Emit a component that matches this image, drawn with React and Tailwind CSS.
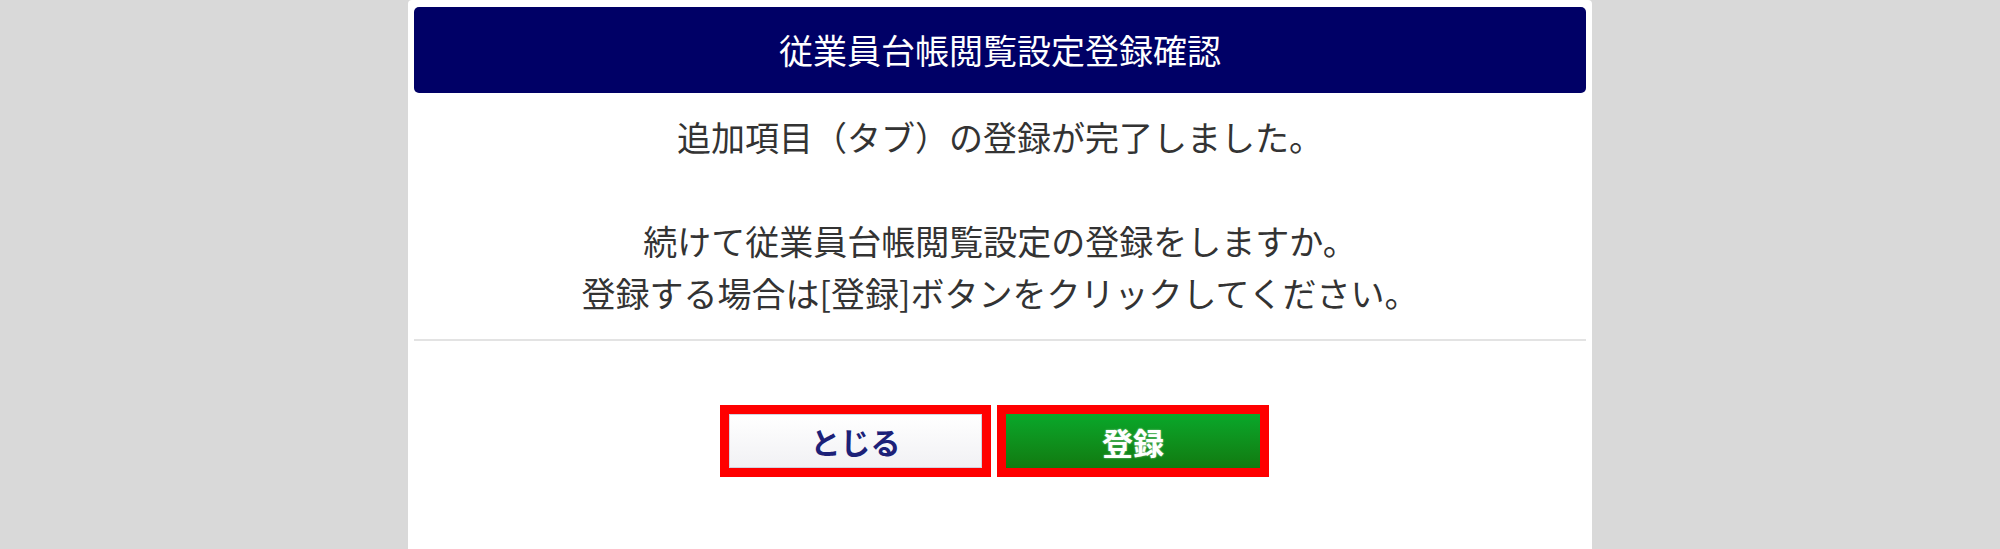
const font = { fontFamily: '"Noto Sans CJK JP", "Noto Sans", sans-serif' };

const App = () => {
  return (
    <div
      className="min-h-[549px] bg-[#d9d9d9] flex justify-center"
      style={font}>
      <div className="w-[1184px] min-h-[549px] bg-white rounded-t-[4px] px-[6px] pt-[7px]">
        {/* title bar */}
        <div className="h-[86px] bg-[#000066] rounded-[5px] flex items-center justify-center">
          <h1 className="text-white text-[34px] leading-none">
            従業員台帳閲覧設定登録確認
          </h1>
        </div>

        {/* message */}
        <div className="text-center text-[#333333] text-[34px] leading-[52px] pt-[18px] pb-[20px]">
          <p>追加項目（タブ）の登録が完了しました。</p>
          <br />
          <p>続けて従業員台帳閲覧設定の登録をしますか。</p>
          <p>登録する場合は[登録]ボタンをクリックしてください。</p>
        </div>

        <hr className="border-0 border-t-2 border-[#e3e3e3]" />

        {/* buttons */}
        <div className="flex justify-center gap-[6px] pt-[64px] pr-[11px]">
          <div className="w-[271px] h-[72px] border-[9px] border-[#ff0000]">
            <button className="w-full h-full flex items-center justify-center bg-gradient-to-b from-white to-[#f1f1f4] border border-[#d0d3e0] text-[#1c2178] text-[30px] font-bold leading-none">
              とじる
            </button>
          </div>
          <div className="w-[272px] h-[72px] border-[9px] border-[#ff0000]">
            <button className="w-full h-full flex items-center justify-center bg-gradient-to-b from-[#08a82a] to-[#117a10] text-white text-[31px] font-bold leading-none [text-shadow:0_0_2px_rgba(255,255,255,0.6)]">
              登録
            </button>
          </div>
        </div>
      </div>
    </div>
  );
};

export default App;
